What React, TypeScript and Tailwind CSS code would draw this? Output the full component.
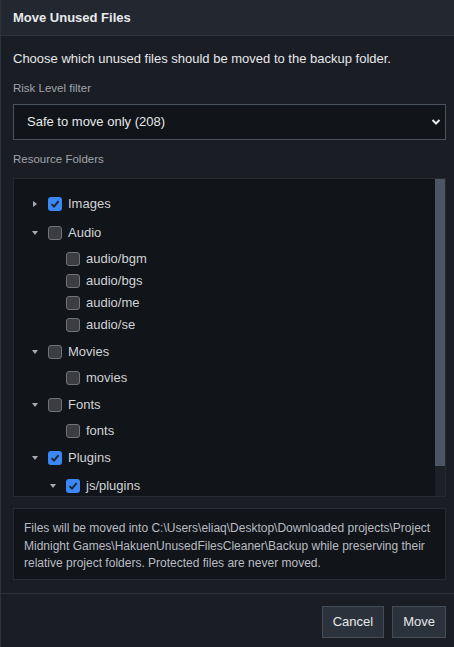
import React, { useState } from 'react';

type Node = {
    label: string;
    checked: boolean;
    expanded?: boolean;
    children?: Node[];
};

const tree: Node[] = [
    { label: 'Images', checked: true, expanded: false, children: [{ label: 'img/pictures', checked: true }] },
    {
        label: 'Audio',
        checked: false,
        expanded: true,
        children: [
            { label: 'audio/bgm', checked: false },
            { label: 'audio/bgs', checked: false },
            { label: 'audio/me', checked: false },
            { label: 'audio/se', checked: false },
        ],
    },
    { label: 'Movies', checked: false, expanded: true, children: [{ label: 'movies', checked: false }] },
    { label: 'Fonts', checked: false, expanded: true, children: [{ label: 'fonts', checked: false }] },
    {
        label: 'Plugins',
        checked: true,
        expanded: true,
        children: [{ label: 'js/plugins', checked: true, expanded: true, children: [{ label: 'js/plugins/core', checked: true }] }],
    },
];

const indent = ['pl-0', 'pl-[18px]', 'pl-[36px]'];

const Checkbox: React.FC<{ checked: boolean }> = ({ checked }) =>
    checked ? (
        <span className="w-[14px] h-[14px] rounded-[3px] bg-[#3b87f5] flex items-center justify-center shrink-0">
            <svg width="10" height="10" viewBox="0 0 10 10">
                <path d="M1.6 5.2 L4 7.6 L8.6 2.2" fill="none" stroke="#1c2430" strokeWidth="1.9" />
            </svg>
        </span>
    ) : (
        <span className="block w-[14px] h-[14px] rounded-[3px] bg-[#3b3d42] border border-[#6f7378] shrink-0" />
    );

const Caret: React.FC<{ open: boolean }> = ({ open }) => (
    <span className="w-[14px] h-full flex items-center justify-center shrink-0">
        {open ? (
            <svg width="6" height="4" viewBox="0 0 6 4">
                <path d="M0 0 L6 0 L3 4 Z" fill="#a8adb3" />
            </svg>
        ) : (
            <svg width="4" height="6" viewBox="0 0 4 6">
                <path d="M0 0 L4 3 L0 6 Z" fill="#a8adb3" />
            </svg>
        )}
    </span>
);

const TreeItem: React.FC<{ node: Node; depth: number }> = ({ node, depth }) => {
    const hasKids = !!node.children;
    return (
        <div className="flex flex-col">
            <div className={`flex items-center ${hasKids ? 'h-[26px]' : 'h-[22px]'} ${indent[depth]}`}>
                {hasKids ? <Caret open={!!node.expanded} /> : <span className="w-[14px] shrink-0" />}
                <span className="ml-[6px]">
                    <Checkbox checked={node.checked} />
                </span>
                <span className="ml-[6px] text-[13px] text-[#d0d3d7] whitespace-nowrap">{node.label}</span>
            </div>
            {hasKids && node.expanded && (
                <div className="flex flex-col pt-[2px]">
                    {node.children!.map((c) => (
                        <TreeItem key={c.label} node={c} depth={depth + 1} />
                    ))}
                </div>
            )}
        </div>
    );
};

export default function App() {
    const [risk, setRisk] = useState('safe');

    return (
        <div className="w-[454px] h-[647px] overflow-hidden bg-[#1a1d23] border-l border-[#2e333b] flex flex-col font-['Liberation_Sans',Arial,sans-serif]">
            <div className="h-[36px] shrink-0 bg-[#232830] border-b border-[#2f343c] flex items-center pl-[12px] pt-[1px]">
                <h1 className="text-[13px] font-bold text-[#e8eaed]">Move Unused Files</h1>
            </div>

            <div className="flex flex-col pl-[12px] pr-[8px] pt-[13px] pb-[13px] border-b border-[#2c3139]">
                <p className="text-[13px] leading-[20px] text-[#e6e8eb]">
                    Choose which unused files should be moved to the backup folder.
                </p>
                <label className="mt-[11px] text-[11.5px] leading-[16px] text-[#a0a5ab]">Risk Level filter</label>
                <div className="relative mt-[8px]">
                    <select
                        value={risk}
                        onChange={(e) => setRisk(e.target.value)}
                        className="w-full h-[36px] appearance-none bg-[#111418] border border-[#4a525e] text-[13px] text-[#e6e8eb] pl-[13px] outline-none"
                    >
                        <option value="safe">Safe to move only (208)</option>
                        <option value="all">All unused files</option>
                    </select>
                    <svg
                        className="absolute right-[5px] top-[14px] pointer-events-none"
                        width="10"
                        height="8"
                        viewBox="0 0 10 8"
                    >
                        <path d="M1.5 2 L5 5.5 L8.5 2" fill="none" stroke="#e6e8eb" strokeWidth="2" />
                    </svg>
                </div>
                <span className="mt-[11px] text-[11.5px] leading-[16px] text-[#a0a5ab]">Resource Folders</span>

                <div className="mt-[11px] h-[319px] bg-[#111418] border border-[#262a31] flex">
                    <div className="flex-1 overflow-hidden pl-[14px] pt-[12px] flex flex-col gap-[3px]">
                        {tree.map((n) => (
                            <TreeItem key={n.label} node={n} depth={0} />
                        ))}
                    </div>
                    <div className="w-[10px] bg-[#1d2127] flex flex-col">
                        <div className="h-[287px] bg-[#4b5563]" />
                    </div>
                </div>

                <div className="mt-[11px] bg-[#111418] border border-[#262a31] px-[10px] pt-[11px] pb-[6px]">
                    <p className="text-[12px] leading-[17.5px] text-[#b9bdc3]">
                        Files will be moved into C:\Users\eliaq\Desktop\Downloaded projects\Project Midnight
                        Games\HakuenUnusedFilesCleaner\Backup while preserving their relative project folders.
                        Protected files are never moved.
                    </p>
                </div>
            </div>

            <div className="flex justify-end gap-[8px] pt-[12px] pr-[8px]">
                <button className="h-[32px] px-[10px] bg-[#2c323c] border border-[#454c57] text-[13px] text-[#e6e8eb]">
                    Cancel
                </button>
                <button className="h-[32px] px-[10px] bg-[#2c323c] border border-[#454c57] text-[13px] text-[#e6e8eb]">
                    Move
                </button>
            </div>
        </div>
    );
}
